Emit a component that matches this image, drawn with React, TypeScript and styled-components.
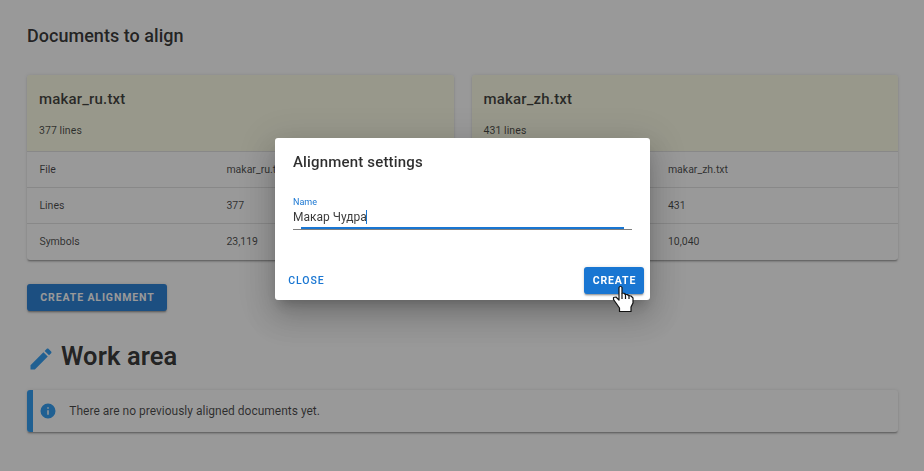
import React from "react";
import styled, { createGlobalStyle } from "styled-components";

const GlobalStyle = createGlobalStyle`
  *, *::before, *::after { box-sizing: border-box; }
  body {
    margin: 0;
    background: #fff;
    color: rgba(0, 0, 0, 0.87);
    font-family: Roboto, "Liberation Sans", sans-serif;
    overflow: hidden;
  }
  h1, h2, h3, p { margin: 0; font-weight: 500; }
`;

const Page = styled.main`
  height: 471px;
  padding: 24px 26px 0 27px;
`;

const SectionTitle = styled.h2`
  font-size: 18px;
  line-height: 24px;
  letter-spacing: 0.03px;
  margin-bottom: 27px;
`;

const Documents = styled.section`
  display: grid;
  grid-template-columns: 1fr 1fr;
  gap: 18px;
`;

const elevation = `
  0 2.25px 0.75px -1.5px rgba(0, 0, 0, 0.2),
  0 1.5px 1.5px 0 rgba(0, 0, 0, 0.14),
  0 0.75px 3.75px 0 rgba(0, 0, 0, 0.12)`;

const Card = styled.article`
  border-radius: 3px;
  box-shadow: ${elevation};
  overflow: hidden;
`;

const CardHeader = styled.header`
  height: 76px;
  padding: 12px 12px;
  background: #fdfde6;
`;

const CardTitle = styled.h3`
  font-size: 15px;
  line-height: 24px;
  letter-spacing: 0.17px;
  color: rgba(0, 0, 0, 0.82);
`;

const CardSubtitle = styled.p`
  margin-top: 12px;
  font-size: 10.5px;
  line-height: 16px;
  font-weight: 400;
  letter-spacing: 0.075px;
  color: rgba(0, 0, 0, 0.78);
`;

const Row = styled.div<{ $split: number }>`
  display: grid;
  grid-template-columns: ${(p) => p.$split}px 1fr;
  align-items: center;
  height: 36px;
  padding: 0 12.4px;
  border-top: 1px solid rgba(0, 0, 0, 0.12);
  font-size: 10.5px;
  color: rgba(0, 0, 0, 0.78);
  &:last-child { height: 37px; padding-bottom: 1px; }
`;

const Button = styled.button<{ $text?: boolean; $width: number }>`
  width: ${(p) => p.$width}px;
  height: 27px;
  padding: 0;
  border: 0;
  border-radius: 3px;
  background: ${(p) => (p.$text ? "transparent" : "#1976d2")};
  color: ${(p) => (p.$text ? "#1976d2" : "#fff")};
  box-shadow: ${(p) => (p.$text ? "none" : elevation)};
  font: ${(p) => (p.$text ? 500 : 700)} 10.5px/27px Roboto, sans-serif;
  letter-spacing: ${(p) => (p.$text ? 0.9375 : 0.88)}px;
  text-indent: 0.9px;
  text-transform: uppercase;
`;

const Actions = styled.div`
  display: flex;
  margin-top: 24px;
`;

const WorkHeading = styled.div`
  display: flex;
  align-items: flex-end;
  gap: 6px;
  height: 42px;
  margin-top: 20px;
`;

const WorkTitle = styled.h1`
  font-size: 25.5px;
  font-weight: 600;
  line-height: 30px;
  letter-spacing: 0.1px;
  margin-bottom: 2px;
`;

const Icon = styled.svg<{ $size: number }>`
  display: block;
  flex: none;
  width: ${(p) => p.$size}px;
  height: ${(p) => p.$size}px;
  fill: #2196f3;
`;

const Alert = styled.div`
  display: flex;
  align-items: center;
  gap: 12px;
  height: 42px;
  margin-top: 17px;
  padding-left: 6.3px;
  border-left: 6px solid #2196f3;
  border-radius: 3px;
  box-shadow: ${elevation};
  color: rgba(0, 0, 0, 0.78);
  font-size: 12px;
`;

const Overlay = styled.div`
  position: fixed;
  inset: 0;
  display: flex;
  align-items: flex-start;
  justify-content: center;
  padding: 138px 0 0 1px;
  background: rgba(33, 33, 33, 0.46);
`;

const Dialog = styled.div`
  position: relative;
  display: flex;
  flex-direction: column;
  width: 375px;
  height: 162px;
  padding: 12px 6px 6px;
  border-radius: 3px;
  background: #fff;
  box-shadow:
    0 8.25px 11.25px -5.25px rgba(0, 0, 0, 0.2),
    0 18px 28.5px 2.25px rgba(0, 0, 0, 0.14),
    0 6.75px 34.5px 6px rgba(0, 0, 0, 0.12);
`;

const DialogTitle = styled(CardTitle)`
  padding: 0 12px;
`;

const Field = styled.label`
  display: flex;
  flex-direction: column;
  margin: 22px 12px 0;
  height: 34px;
  border-bottom: 1px solid rgba(0, 0, 0, 0.5);
`;

const FieldLabel = styled.span`
  height: 12px;
  color: #1976d2;
  font-size: 9px;
  line-height: 12px;
`;

const FieldValue = styled.span`
  display: flex;
  align-items: center;
  height: 18px;
  color: rgba(0, 0, 0, 0.78);
  font-size: 12px;
`;

const Caret = styled.i`
  width: 1px;
  height: 14px;
  margin-left: -1px;
  background: #1976d2;
`;

const FocusLine = styled.span`
  flex: none;
  height: 2px;
  margin: 2px 8px 0 8px;
  background: #1976d2;
`;

const DialogActions = styled.footer`
  display: flex;
  justify-content: space-between;
  margin-top: auto;
`;

const Pointer = styled.svg`
  position: absolute;
  left: 337px;
  top: 147px;
  width: 23px;
  height: 30px;
`;

const documents = [
  { name: "makar_ru.txt", lines: "377", symbols: "23,119", split: 187 },
  { name: "makar_zh.txt", lines: "431", symbols: "10,040", split: 184 },
];

export default function App() {
  return (
    <>
      <GlobalStyle />
      <Page>
        <SectionTitle>Documents to align</SectionTitle>
        <Documents>
          {documents.map((doc) => (
            <Card key={doc.name}>
              <CardHeader>
                <CardTitle>{doc.name}</CardTitle>
                <CardSubtitle>{doc.lines} lines</CardSubtitle>
              </CardHeader>
              <Row $split={doc.split}><span>File</span><span>{doc.name}</span></Row>
              <Row $split={doc.split}><span>Lines</span><span>{doc.lines}</span></Row>
              <Row $split={doc.split}><span>Symbols</span><span>{doc.symbols}</span></Row>
            </Card>
          ))}
        </Documents>
        <Actions>
          <Button $width={140}>Create alignment</Button>
        </Actions>
        <WorkHeading>
          <Icon $size={28} viewBox="0 0 24 24">
            <path d="M20.71 7.04c.39-.39.39-1.04 0-1.41l-2.34-2.34c-.37-.39-1.02-.39-1.41 0l-1.84 1.83 3.75 3.75M3 17.25V21h3.75L17.81 9.93l-3.75-3.75L3 17.25z" />
          </Icon>
          <WorkTitle>Work area</WorkTitle>
        </WorkHeading>
        <Alert>
          <Icon $size={18} viewBox="0 0 24 24">
            <path d="M13 9h-2V7h2m0 10h-2v-6h2m-1-9A10 10 0 0 0 2 12a10 10 0 0 0 10 10 10 10 0 0 0 10-10A10 10 0 0 0 12 2z" />
          </Icon>
          <span>There are no previously aligned documents yet.</span>
        </Alert>
      </Page>
      <Overlay>
        <Dialog role="dialog">
          <DialogTitle>Alignment settings</DialogTitle>
          <Field>
            <FieldLabel>Name</FieldLabel>
            <FieldValue>Макар Чудра<Caret /></FieldValue>
            <FocusLine />
          </Field>
          <DialogActions>
            <Button $text $width={50}>Close</Button>
            <Button $width={60}>Create</Button>
          </DialogActions>
          <Pointer viewBox="0 0 23 30">
            <path
              d="M7 2.5 Q8.5 0 10 2.5 V8 L13 8.5 V9.5 L16 9.5 V10.5 L19 11 L21 13 V18 L19 22 V26.5 H7.5 V23 L4 18 L1.5 14.5 V12.5 L4 12 L7 15 Z"
              fill="#fff" stroke="#111" strokeWidth="1.2" strokeLinejoin="round"
            />
            <path d="M10 8v6M13.5 9v5M17 10v4" fill="none" stroke="#111" strokeWidth="1.2" />
          </Pointer>
        </Dialog>
      </Overlay>
    </>
  );
}
